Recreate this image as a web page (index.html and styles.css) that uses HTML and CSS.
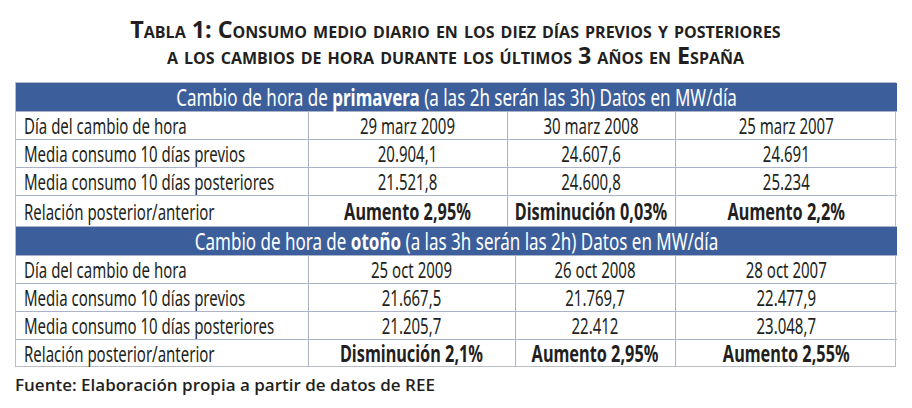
FILE: index.html
```html
<!DOCTYPE html>
<html lang="es">
<head>
<meta charset="utf-8">
<title>Tabla 1</title>
<link rel="stylesheet" href="styles.css">
</head>
<body>
<div class="page">
  <h1 class="title">
    <span class="line">Tabla 1: Consumo medio diario en los diez días previos y posteriores</span>
    <span class="line">a los cambios de hora durante los últimos 3 años en España</span>
  </h1>
  <div class="frame">
    <table class="data spring">
      <colgroup><col class="c1"><col class="c2a"><col class="c3a"><col class="c4"></colgroup>
      <tr class="head"><th colspan="4"><span class="t">Cambio de hora de <b>primavera</b> (a las 2h serán las 3h) Datos en MW/día</span></th></tr>
      <tr class="row"><td><span class="t">Día del cambio de hora</span></td><td><span class="t">29 marz 2009</span></td><td><span class="t">30 marz 2008</span></td><td><span class="t">25 marz 2007</span></td></tr>
      <tr class="row"><td><span class="t">Media consumo 10 días previos</span></td><td><span class="t">20.904,1</span></td><td><span class="t">24.607,6</span></td><td><span class="t">24.691</span></td></tr>
      <tr class="row"><td><span class="t">Media consumo 10 días posteriores</span></td><td><span class="t">21.521,8</span></td><td><span class="t">24.600,8</span></td><td><span class="t">25.234</span></td></tr>
      <tr class="row strong"><td><span class="t">Relación posterior/anterior</span></td><td><span class="t">Aumento 2,95%</span></td><td><span class="t">Disminución 0,03%</span></td><td><span class="t">Aumento 2,2%</span></td></tr>
    </table>
    <table class="data autumn">
      <colgroup><col class="c1"><col class="c2b"><col class="c3b"><col class="c4"></colgroup>
      <tr class="head"><th colspan="4"><span class="t">Cambio de hora de <b>otoño</b> (a las 3h serán las 2h) Datos en MW/día</span></th></tr>
      <tr class="row"><td><span class="t">Día del cambio de hora</span></td><td><span class="t">25 oct 2009</span></td><td><span class="t">26 oct 2008</span></td><td><span class="t">28 oct 2007</span></td></tr>
      <tr class="row"><td><span class="t">Media consumo 10 días previos</span></td><td><span class="t">21.667,5</span></td><td><span class="t">21.769,7</span></td><td><span class="t">22.477,9</span></td></tr>
      <tr class="row"><td><span class="t">Media consumo 10 días posteriores</span></td><td><span class="t">21.205,7</span></td><td><span class="t">22.412</span></td><td><span class="t">23.048,7</span></td></tr>
      <tr class="row strong last"><td><span class="t">Relación posterior/anterior</span></td><td><span class="t">Disminución 2,1%</span></td><td><span class="t">Aumento 2,95%</span></td><td><span class="t">Aumento 2,55%</span></td></tr>
    </table>
  </div>
  <p class="source">Fuente: Elaboración propia a partir de datos de REE</p>
</div>
</body>
</html>
```

FILE: styles.css
```css
html, body {
  margin: 0;
  padding: 0;
  background: #ffffff;
}
.page {
  width: 912px;
  height: 408px;
  padding: 16px 0 0 15px;
  box-sizing: border-box;
  color: #231f20;
}
.title {
  margin: 0 16px 0 0;
  text-align: center;
  font-family: "Open Sans", sans-serif;
  font-weight: 700;
  font-size: 23.3px;
  line-height: 26px;
  font-variant: small-caps;
}
.title .line {
  display: block;
}
.frame {
  margin-top: 14px;
  width: 881px;
  box-sizing: border-box;
  border: 1px solid #b9bdca;
}
.data {
  width: 100%;
  border-collapse: collapse;
  table-layout: fixed;
  font-family: "Noto Sans", sans-serif;
  font-size: 15px;
  line-height: 20px;
  white-space: nowrap;
}
.t {
  display: inline-block;
  vertical-align: middle;
  transform: scaleY(1.45);
  transform-origin: 50% 55%;
}
.c1 { width: 292px; }
.c2a { width: 199px; }
.c3a { width: 168px; }
.c2b { width: 207px; }
.c3b { width: 160px; }
.c4 { width: 222px; }
.head th {
  background: #3c5f9b;
  color: #ffffff;
  font-weight: 400;
  font-size: 17px;
  height: 28px;
  padding: 0;
  text-align: center;
}
.head .t {
  transform: scaleY(1.35);
}
.head b {
  font-weight: 700;
}
.row td {
  height: 27px;
  padding: 0;
  border: 1px solid #aab3ca;
  text-align: center;
}
.row td:first-child {
  text-align: left;
  padding-left: 8px;
  border-left: none;
}
.row td:last-child {
  border-right: none;
}
.row.strong td {
  font-weight: 700;
  font-size: 16.3px;
  height: 30px;
}
.row.strong td .t {
  transform: scaleY(1.37);
}
.row.strong td:first-child {
  font-weight: 400;
  font-size: 15px;
}
.row.strong td:first-child .t {
  transform: scaleY(1.45);
}
.row.last td {
  border-bottom: none;
  height: 26px;
}
.source {
  margin: 6px 0 0 0;
  font-family: "Open Sans", sans-serif;
  font-weight: 600;
  font-size: 17px;
}
```
